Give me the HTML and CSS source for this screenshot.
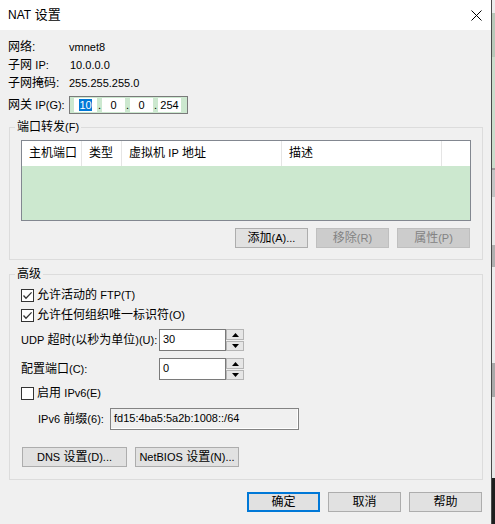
FILE: index.html
```html
<!DOCTYPE html>
<html lang="zh-CN">
<head>
<meta charset="utf-8">
<title>NAT 设置</title>
<link rel="stylesheet" href="styles.css">
</head>
<body>
<div class="screen">
  <div class="window">
    <div class="titlebar">
      <span class="title"><span class="l">NAT</span> 设置</span>
      <span class="close"><svg width="11" height="11" viewBox="0 0 11 11"><path d="M0.5 0.5L10.5 10.5M10.5 0.5L0.5 10.5" stroke="#000" stroke-width="1" fill="none"/></svg></span>
    </div>
    <div class="content">
      <div class="info">
        <span>网络:</span><span class="l">vmnet8</span>
        <span>子网 <span class="l">IP:</span></span><span class="l v2">10.0.0.0</span>
        <span>子网掩码:</span><span class="l">255.255.255.0</span>
      </div>
      <div class="gateway">
        <span class="glabel">网关 <span class="l">IP(G):</span></span>
        <div class="ipbox">
          <span class="octet l"><span class="sel">10</span></span><span class="dot l">.</span>
          <span class="octet l">0</span><span class="dot l">.</span>
          <span class="octet l">0</span><span class="dot l">.</span>
          <span class="octet l">254</span>
        </div>
      </div>

      <fieldset class="group pf">
        <legend>端口转发<span class="l">(F)</span></legend>
        <div class="gbody pfbody">
          <div class="list">
            <div class="list-head">
              <span class="col c1">主机端口</span>
              <span class="col c2">类型</span>
              <span class="col c3">虚拟机 <span class="l">IP</span> 地址</span>
              <span class="col c4">描述</span>
              <span class="col c5"></span>
            </div>
            <div class="list-body"></div>
          </div>
          <div class="btnrow">
            <button class="btn w73">添加<span class="l">(A)...</span></button>
            <button class="btn w73 disabled">移除<span class="l">(R)</span></button>
            <button class="btn w73 disabled">属性<span class="l">(P)</span></button>
          </div>
        </div>
      </fieldset>

      <fieldset class="group adv">
        <legend>高级</legend>
        <div class="gbody advbody">
          <div class="checkrow">
            <span class="cb"><svg width="11" height="11" viewBox="0 0 11 11"><path d="M1.5 5.5L4 8.2L9.6 2.4" stroke="#333" stroke-width="1.3" fill="none"/></svg></span>
            <span>允许活动的 <span class="l">FTP(T)</span></span>
          </div>
          <div class="checkrow">
            <span class="cb"><svg width="11" height="11" viewBox="0 0 11 11"><path d="M1.5 5.5L4 8.2L9.6 2.4" stroke="#333" stroke-width="1.3" fill="none"/></svg></span>
            <span>允许任何组织唯一标识符<span class="l">(O)</span></span>
          </div>
          <div class="field udp">
            <span class="flabel"><span class="l">UDP</span> 超时<span class="l">(</span>以秒为单位<span class="l">)(U):</span></span>
            <span class="edit l">30</span>
            <span class="spin">
              <span class="sbtn up"><svg width="7" height="4" viewBox="0 0 7 4"><path d="M0 4L3.5 0L7 4Z" fill="#000"/></svg></span>
              <span class="sbtn down"><svg width="7" height="4" viewBox="0 0 7 4"><path d="M0 0L3.5 4L7 0Z" fill="#000"/></svg></span>
            </span>
          </div>
          <div class="field port">
            <span class="flabel">配置端口<span class="l">(C):</span></span>
            <span class="edit l">0</span>
            <span class="spin">
              <span class="sbtn up"><svg width="7" height="4" viewBox="0 0 7 4"><path d="M0 4L3.5 0L7 4Z" fill="#000"/></svg></span>
              <span class="sbtn down"><svg width="7" height="4" viewBox="0 0 7 4"><path d="M0 0L3.5 4L7 0Z" fill="#000"/></svg></span>
            </span>
          </div>
          <div class="checkrow ipv6">
            <span class="cb"></span>
            <span>启用 <span class="l">IPv6(E)</span></span>
          </div>
          <div class="field prefix">
            <span class="plabel"><span class="l">IPv6</span> 前缀<span class="l">(6):</span></span>
            <span class="edit ro l">fd15:4ba5:5a2b:1008::/64</span>
          </div>
          <div class="btnrow left">
            <button class="btn w105"><span class="l">DNS</span> 设置<span class="l">(D)...</span></button>
            <button class="btn w104"><span class="l">NetBIOS</span> 设置<span class="l">(N)...</span></button>
          </div>
        </div>
      </fieldset>

      <div class="btnrow bottom">
        <button class="btn w73 default">确定</button>
        <button class="btn w73">取消</button>
        <button class="btn w73">帮助</button>
      </div>
    </div>
  </div>
  <div class="edge"></div>
  <div class="desktop"></div>
</div>
</body>
</html>
```

FILE: styles.css
```css
html, body {
  margin: 0;
  padding: 0;
}

body {
  width: 495px;
  height: 524px;
  overflow: hidden;
  font-family: "Liberation Sans", "Noto Sans CJK SC", sans-serif;
  font-size: 12px;
  color: #000;
}

.l {
  font-size: 11px;
}

.screen {
  display: flex;
  height: 524px;
}

.window {
  width: 491px;
  height: 524px;
  background: #f0f0f0;
  display: flex;
  flex-direction: column;
}

.edge {
  width: 1px;
  background: #4a4a4a;
}

.desktop {
  width: 3px;
  background: linear-gradient(to bottom,
    #ececec 0, #ececec 13px,
    #b9c8b9 13px, #b9c8b9 57px,
    #cbdccb 57px, #cbdccb 168px,
    #9a9a9a 168px, #9a9a9a 170px,
    #c4c4c4 170px, #c4c4c4 197px,
    #e8e8e8 197px, #e8e8e8 245px,
    #b0b0b0 245px, #b0b0b0 267px,
    #ececec 267px, #ececec 363px,
    #a9a9a9 363px, #a9a9a9 397px,
    #e8e8e8 397px, #e8e8e8 478px,
    #1e1e1e 478px, #1e1e1e 524px);
}

/* title bar */
.titlebar {
  height: 30px;
  flex: none;
  background: #fff;
  display: flex;
  align-items: center;
  padding: 0 9px 0 8px;
}

.title {
  font-size: 13px;
  line-height: 16px;
}

.title .l {
  font-size: 12px;
}

.close {
  margin-left: auto;
  display: flex;
}

/* content */
.content {
  padding: 8px 0 0 8px;
  display: flex;
  flex-direction: column;
}

.info {
  display: grid;
  grid-template-columns: 61px auto;
  grid-auto-rows: 18px;
  line-height: 18px;
  align-items: center;
}

.v2 {
  padding-left: 1px;
}

.gateway {
  margin-top: 4px;
  height: 18px;
  display: flex;
  align-items: center;
}

.glabel {
  width: 61px;
  line-height: 18px;
}

.ipbox {
  width: 119px;
  height: 18px;
  box-sizing: border-box;
  border: 1px solid #7a7a7a;
  background: #cce8cf;
  display: flex;
  align-items: center;
  padding-left: 4px;
}

.octet {
  width: 23px;
  height: 14px;
  line-height: 14px;
  background: #fff;
  text-align: center;
}

.dot {
  width: 5px;
  line-height: 14px;
  text-align: center;
}

.sel {
  display: inline-block;
  background: #0078d7;
  color: #fff;
  line-height: 12px;
}

/* group boxes */
.group {
  margin: 0 0 0 1px;
  width: 474px;
  box-sizing: border-box;
  border: 1px solid #dcdcdc;
  padding: 0;
  min-width: 0;
}

.group legend {
  margin-left: 5px;
  padding: 0 2px;
  line-height: 14px;
}

.pf {
  margin-top: 6px;
}

.adv {
  margin-top: 7px;
}

.gbody {
  padding: 0 11px;
}

.pfbody {
  padding-top: 6px;
  padding-bottom: 11px;
}

.advbody {
  padding-top: 4px;
  padding-bottom: 12px;
}

/* list view */
.list {
  width: 450px;
  height: 81px;
  box-sizing: border-box;
  border: 1px solid #828790;
  display: flex;
  flex-direction: column;
}

.list-head {
  height: 25px;
  flex: none;
  background: #fff;
  display: flex;
}

.col {
  box-sizing: border-box;
  height: 25px;
  line-height: 25px;
  padding-left: 7px;
  border-right: 1px solid #e5e5e5;
  white-space: nowrap;
}

.c1 { width: 60px; }
.c2 { width: 40px; }
.c3 { width: 160px; }
.c4 { width: 160px; }
.c5 { flex: 1; border-right: 0; }

.list-body {
  flex: 1;
  background: #cce8cf;
}

/* buttons */
.btnrow {
  display: flex;
  justify-content: flex-end;
  gap: 8px;
}

.pfbody .btnrow {
  margin-top: 7px;
  padding-right: 1px;
}

.btnrow.left {
  justify-content: flex-start;
  margin-top: 17px;
  padding-left: 1px;
}

.btnrow.bottom {
  margin-top: 12px;
  margin-right: 9px;
}

.btn {
  height: 20px;
  box-sizing: border-box;
  border: 1px solid #adadad;
  background: #e1e1e1;
  font-family: inherit;
  font-size: 12px;
  color: #000;
  padding: 0;
  line-height: 18px;
  white-space: nowrap;
}

.w73 { width: 73px; }
.w105 { width: 105px; }
.w104 { width: 104px; }

.btn.disabled {
  background: #cccccc;
  border-color: #bfbfbf;
  color: #838383;
}

.btn.default {
  border: 2px solid #0078d7;
  line-height: 16px;
}

/* checkboxes */
.checkrow {
  height: 20px;
  display: flex;
  align-items: center;
  gap: 3px;
  line-height: 16px;
}

.cb {
  width: 13px;
  height: 13px;
  box-sizing: border-box;
  border: 1px solid #333;
  background: #fff;
  display: flex;
  align-items: center;
  justify-content: center;
}

.checkrow.ipv6 {
  margin-top: 3px;
}

/* fields */
.field {
  height: 22px;
  display: flex;
  align-items: center;
}

.field.udp {
  margin-top: 4px;
}

.field.port {
  margin-top: 7px;
}

.field.prefix {
  margin-top: 5px;
  padding-left: 17px;
}

.flabel {
  width: 138px;
  line-height: 16px;
  white-space: nowrap;
}

.plabel {
  width: 72px;
  line-height: 16px;
  white-space: nowrap;
}

.edit {
  width: 67px;
  height: 22px;
  box-sizing: border-box;
  border: 1px solid #7a7a7a;
  background: #fff;
  padding-left: 3px;
  line-height: 18px;
}

.edit.ro {
  width: 189px;
  background: #f0f0f0;
  border-color: #838383;
  box-shadow: inset -1px -1px 0 #fff;
}

.spin {
  width: 18px;
  height: 22px;
  display: flex;
  flex-direction: column;
  justify-content: space-between;
}

.sbtn {
  box-sizing: border-box;
  border: 1px solid #b5b5b5;
  background: #e6e6e6;
  display: flex;
  align-items: center;
  justify-content: center;
}

.sbtn.up { height: 11px; }
.sbtn.down { height: 10px; }
```
